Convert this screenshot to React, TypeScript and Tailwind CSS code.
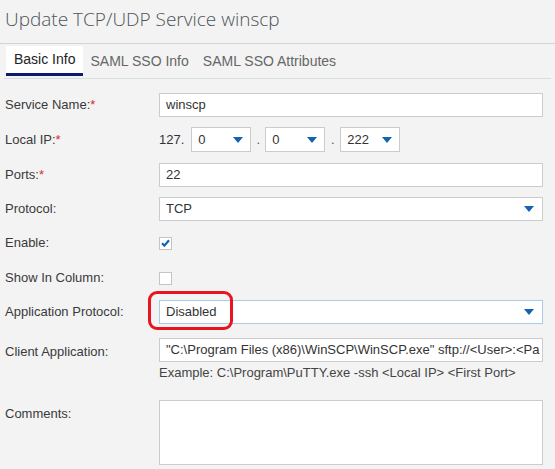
import React from 'react';

const font = { fontFamily: '"Liberation Sans", Arial, sans-serif' };

const Arrow = () => (
  <svg width="10" height="6" viewBox="0 0 10 6" className="shrink-0">
    <path d="M0 0 H10 L5 6 Z" fill="#1462b0" />
  </svg>
);

const Label = ({ text, required, top }: { text: string; required?: boolean; top?: boolean }) => (
  <div className={`w-[154px] shrink-0 text-[13px] text-[#3a3a3a] ${top ? 'self-start pt-[4px]' : ''}`}>
    {text}
    {required && <span className="text-[#e0262b]">*</span>}
  </div>
);

const TextBox = ({ value }: { value: string }) => (
  <div className="flex h-[24px] w-[384px] items-center overflow-hidden whitespace-nowrap border border-[#cccccc] bg-white px-[6px] text-[13px] text-[#333]">
    {value}
  </div>
);

const Select = ({ value, className }: { value: string; className?: string }) => (
  <div
    className={`flex h-[24px] items-center justify-between border bg-white pl-[6px] pr-[8px] text-[13px] text-[#333] ${
      className ?? 'w-[384px] border-[#cccccc]'
    }`}
  >
    <span>{value}</span>
    <Arrow />
  </div>
);

const IpSelect = ({ value }: { value: string }) => (
  <div className="flex h-[25px] w-[60px] items-center justify-between border border-[#cccccc] bg-white pl-[6px] pr-[7px] text-[13px] text-[#333]">
    <span>{value}</span>
    <Arrow />
  </div>
);

const Checkbox = ({ checked }: { checked?: boolean }) => (
  <div className="flex h-[13px] w-[13px] items-center justify-center border border-[#c4c4c4] bg-white">
    {checked && (
      <svg width="9" height="8" viewBox="0 0 9 8">
        <path d="M1 4.2 L3.4 6.6 L8 1.2" fill="none" stroke="#1462b0" strokeWidth="2.2" />
      </svg>
    )}
  </div>
);

export default function App() {
  return (
    <div className="min-h-[469px] w-full bg-[#f3f3f3]" style={font}>
      <div className="px-[5px] pt-[5px]">
        <h1
          className="text-[19px] font-light leading-[28px] text-[#4f5358]"
          style={{ fontFamily: '"Open Sans", "Noto Sans", sans-serif' }}
        >
          Update TCP/UDP Service winscp
        </h1>
      </div>
      <div className="mt-[10px] border-t border-[#d4d4d4]" />
      <div className="flex h-[32px] items-end pl-[6px] text-[14px]">
        <div className="flex h-[30px] items-center border-b-[3px] border-[#0d1a6e] bg-white px-[8px] text-[#222]">
          Basic Info
        </div>
        <div className="flex h-[30px] items-center pl-[7px] pr-[8px] text-[#666]">SAML SSO Info</div>
        <div className="flex h-[30px] items-center px-[6px] text-[#666]">SAML SSO Attributes</div>
      </div>
      <div className="mx-[4px] mt-[2px] border-t border-[#d6dfe0]" />

      <div className="flex flex-col px-[5px] pt-[14px]">
        <div className="flex h-[24px] items-center">
          <Label text="Service Name:" required />
          <TextBox value="winscp" />
        </div>

        <div className="mt-[10px] flex h-[25px] items-center">
          <Label text="Local IP:" required />
          <span className="mr-[7px] text-[13px] text-[#333]">127.</span>
          <IpSelect value="0" />
          <span className="w-[14px] text-center text-[13px] text-[#555]">.</span>
          <IpSelect value="0" />
          <span className="w-[15px] text-center text-[13px] text-[#555]">.</span>
          <IpSelect value="222" />
        </div>

        <div className="mt-[11px] flex h-[24px] items-center">
          <Label text="Ports:" required />
          <TextBox value="22" />
        </div>

        <div className="mt-[10px] flex h-[24px] items-center">
          <Label text="Protocol:" />
          <Select value="TCP" />
        </div>

        <div className="mt-[10px] flex h-[24px] items-center">
          <Label text="Enable:" />
          <Checkbox checked />
        </div>

        <div className="mt-[11px] flex h-[24px] items-center">
          <Label text="Show In Column:" />
          <Checkbox />
        </div>

        <div className="mt-[10px] flex h-[23px] items-center">
          <Label text="Application Protocol:" />
          <div className="relative">
            <Select value="Disabled" className="h-[23px] w-[384px] border-[#a9cbe6]" />
            <div className="pointer-events-none absolute left-[-11px] top-[-9px] h-[39px] w-[85px] rounded-[9px] border-[3px] border-[#e8141f]" />
          </div>
        </div>

        <div className="mt-[15px] flex items-start">
          <Label text="Client Application:" top />
          <div className="flex flex-col">
            <TextBox value={'"C:\\Program Files (x86)\\WinSCP\\WinSCP.exe" sftp://<User>:<Pa'} />
            <div className="mt-[3px] text-[13px] leading-[16px] text-[#444]">
              {'Example: C:\\Program\\PuTTY.exe -ssh <Local IP> <First Port>'}
            </div>
          </div>
        </div>

        <div className="mt-[19px] flex items-start">
          <Label text="Comments:" top />
          <div className="h-[65px] w-[384px] border border-[#cccccc] bg-white" />
        </div>
      </div>
    </div>
  );
}
